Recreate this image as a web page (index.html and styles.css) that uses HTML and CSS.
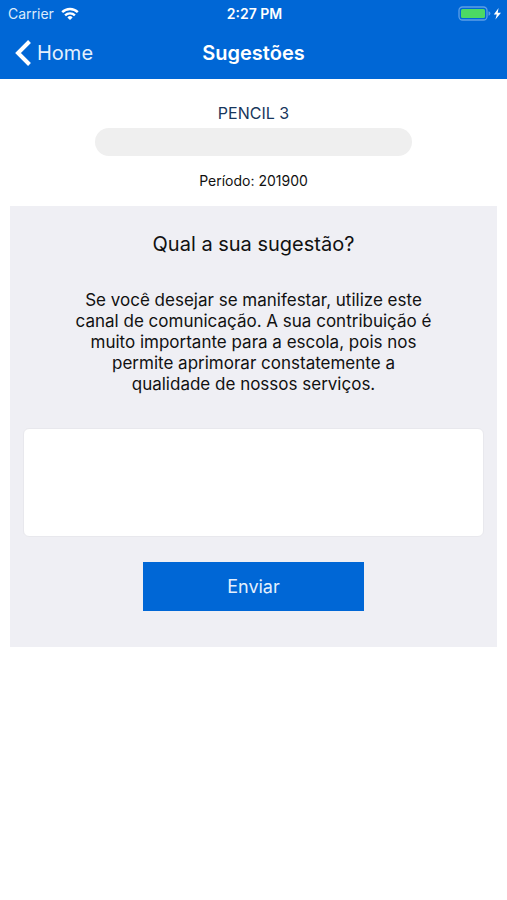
FILE: index.html
```html
<!DOCTYPE html>
<html lang="pt-BR">
<head>
<meta charset="utf-8">
<meta name="viewport" content="width=device-width, initial-scale=1">
<title>Sugestões</title>
<link rel="stylesheet" href="styles.css">
</head>
<body>
<header class="top">
  <div class="status">
    <div class="carrier"><span>Carrier</span>
      <svg width="18" height="14" viewBox="0 0 18 14" aria-hidden="true"><g fill="none" stroke="#fff" stroke-width="2.4"><path d="M1.2 5.2a11 11 0 0 1 15.6 0"/><path d="M4.1 8.4a7 7 0 0 1 9.800 0"/></g><path d="M9 13l-2.600-2.600a3.700 3.700 0 0 1 5.200 0z" fill="#fff"/></svg>
    </div>
    <time class="clock">2:27 PM</time>
    <div class="power">
      <svg width="43" height="15" viewBox="0 0 43 15" aria-hidden="true"><rect x="1" y="1" width="28" height="13" rx="3.500" fill="none" stroke="#5c9fe6" stroke-width="1.300"/><rect x="3" y="3" width="24" height="9" rx="1.500" fill="#4cd964"/><path d="M30.500 5.200q1.900.6 1.900 2.300t-1.900 2.300z" fill="#5c9fe6"/><path d="M40.600 2L35.800 8.500h3L37.400 13.500 43 6.700h-3.300z" fill="#fff"/></svg>
    </div>
  </div>
  <nav class="bar">
    <a class="back" href="#home"><svg width="17" height="26" viewBox="0 0 17 26" aria-hidden="true"><path d="M14.500 1.500L3 13l11.500 11.500" fill="none" stroke="#fff" stroke-width="4"/></svg><span>Home</span></a>
    <h1>Sugestões</h1>
  </nav>
</header>
<main>
  <p class="student">PENCIL 3</p>
  <div class="placeholder"></div>
  <p class="period">Período: 201900</p>
  <form class="card">
    <h2>Qual a sua sugestão?</h2>
    <p class="intro" id="intro">Se você desejar se manifestar, utilize este canal de comunicação. A sua contribuição é muito importante para a escola, pois nos permite aprimorar constatemente a qualidade de nossos serviços.</p>
    <textarea aria-label="Sugestão" aria-describedby="intro"></textarea>
    <button type="button">Enviar</button>
  </form>
</main>
</body>
</html>
```
FILE: styles.css
```css
* { box-sizing: border-box; }
body {
  margin: 0;
  background: #fff;
  color: #111;
  font-family: Inter, "Liberation Sans", sans-serif;
}
h1, h2, p { margin: 0; font-weight: 400; }
.top { background: #0067d6; color: #fff; }
.status, .bar {
  display: grid;
  grid-template-columns: 1fr auto 1fr;
  align-items: center;
}
.status { height: 27px; padding: 0 6px 0 8px; font-size: 14px; }
.carrier { display: flex; align-items: center; gap: 7px; }
.carrier span { color: #dcebfb; }
.clock { font-weight: 600; }
.power { display: flex; justify-content: flex-end; }
.bar { height: 52px; padding: 0 15px; }
.back {
  display: flex;
  align-items: center;
  gap: 5px;
  color: #e4f0fd;
  font-size: 20px;
  text-decoration: none;
}
h1 { font-size: 20px; font-weight: 600; }
main { padding: 24px 10px; text-align: center; }
.student { color: #17365c; font-size: 16px; line-height: 20px; }
.placeholder {
  width: 65%;
  height: 28px;
  margin: 5px auto 15px;
  border-radius: 14px;
  background: #efefef;
}
.period { font-size: 14px; line-height: 20px; }
.card {
  display: flex;
  flex-direction: column;
  align-items: center;
  margin-top: 15px;
  padding: 24px 13px 36px;
  background: #efeff4;
}
h2 { font-size: 20px; line-height: 28px; }
.intro {
  max-width: 360px;
  margin: 32px 0 33px;
  font-size: 17px;
  line-height: 21px;
}
textarea {
  width: 100%;
  height: 109px;
  padding: 8px;
  border: 1px solid #e8e8ed;
  border-radius: 6px;
  background: #fff;
  font: inherit;
  resize: none;
}
button {
  width: 48%;
  height: 49px;
  margin-top: 25px;
  border: 0;
  background: #0067d6;
  color: #e4f0fd;
  font: inherit;
  font-size: 18px;
}
```
